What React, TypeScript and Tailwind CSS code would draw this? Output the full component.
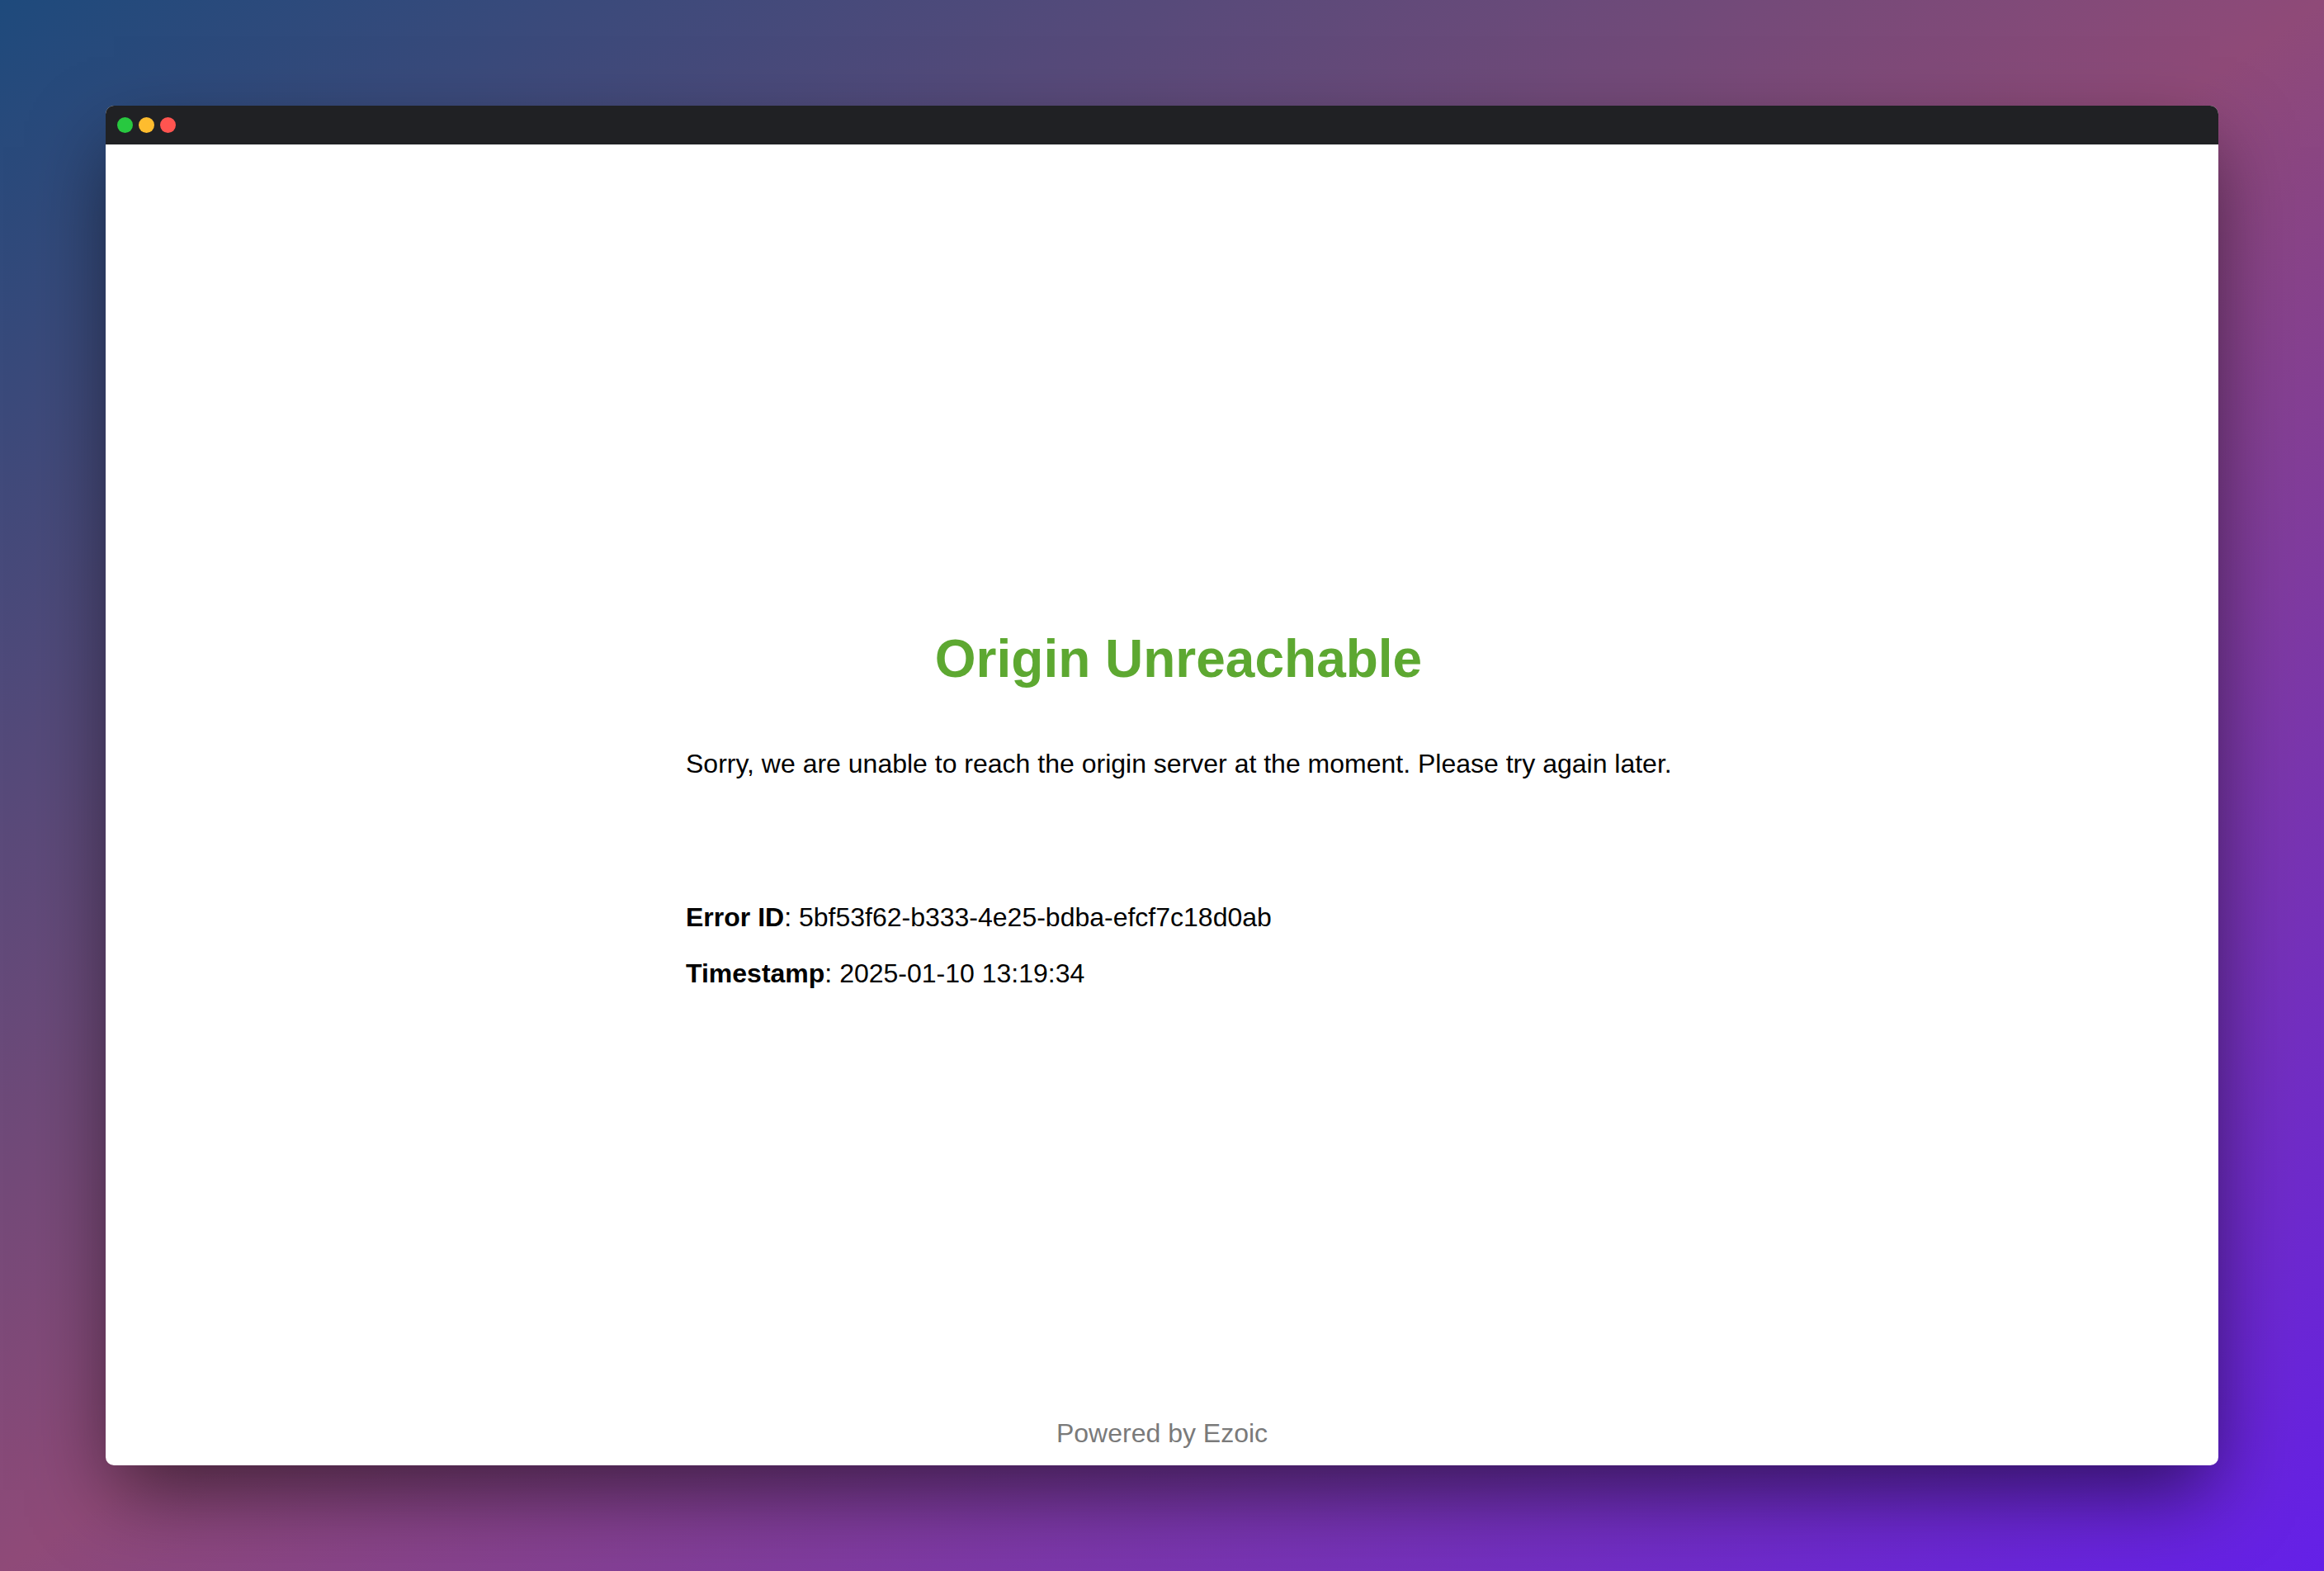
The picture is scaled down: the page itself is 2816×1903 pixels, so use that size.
export default function App() {
  return (
    <div className="h-screen w-full p-[128px] bg-[linear-gradient(to_bottom_right,#1e4a7c,#8f4a78_50%,#6420e8)] font-['Liberation_Sans',Arial,sans-serif]">
      {/* Browser window */}
      <div className="flex h-full flex-col overflow-hidden rounded-[10px] bg-white shadow-[0_40px_90px_-10px_rgba(0,0,0,0.55)]">
        {/* Title bar */}
        <div className="flex h-[47px] shrink-0 items-center gap-[7px] bg-[#202124] pl-[14px]">
          <span className="h-[19px] w-[19px] rounded-full bg-[#28c840]" />
          <span className="h-[19px] w-[19px] rounded-full bg-[#febc2e]" />
          <span className="h-[19px] w-[19px] rounded-full bg-[#ff5450]" />
        </div>

        {/* Page */}
        <div className="flex flex-1 flex-col">
          <div className="ml-[703px] mt-[586px] w-[1194px] text-black">
            <h1 className="whitespace-nowrap text-center text-[64px] font-bold leading-[74px] text-[#5da831]">Origin Unreachable</h1>
            <p className="mt-[72px] whitespace-nowrap text-[32px] leading-[37px]">
              Sorry, we are unable to reach the origin server at the moment. Please try again later.
            </p>
            <p className="mt-[149px] whitespace-nowrap text-[32px] leading-[37px]">
              <strong className="font-bold">Error ID</strong>: 5bf53f62-b333-4e25-bdba-efcf7c18d0ab
            </p>
            <p className="mt-[31px] whitespace-nowrap text-[32px] leading-[37px]">
              <strong className="font-bold">Timestamp</strong>: 2025-01-10 13:19:34
            </p>
          </div>
          <div className="mt-auto pb-[20px] text-center text-[32px] leading-[37px] text-[#7a7a7a]">Powered by Ezoic</div>
        </div>
      </div>
    </div>
  );
}
